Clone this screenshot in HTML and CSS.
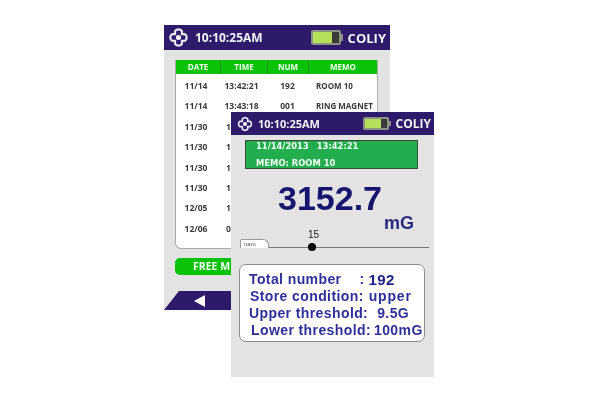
FILE: index.html
```html
<!DOCTYPE html>
<html lang="en">
<head>
    <meta charset="UTF-8">
    <title>COLIY gaussmeter</title>
    <link rel="stylesheet" href="styles.css">
</head>
<body>
    <svg width="0" height="0" class="defs">
        <symbol id="logo" viewBox="2 2 20 20">
            <path fill="none" stroke="#e8e6f2" stroke-width="1.9" d="M9 6.5 A3.6 3.6 0 0 1 15 6.5 L15 9 L17.5 9 A3.6 3.6 0 0 1 17.5 15 L15 15 L15 17.5 A3.6 3.6 0 0 1 9 17.5 L9 15 L6.5 15 A3.6 3.6 0 0 1 6.5 9 L9 9 Z"/>
            <circle cx="12" cy="12" r="2.2" fill="#fff"/>
        </symbol>
    </svg>

    <!-- back screen: record list -->
    <div class="device device-back">
        <div class="topbar">
            <svg class="logo"><use href="#logo"/></svg>
            <span class="clock">10:10:25AM</span>
            <div class="battery"><div class="charge"></div></div>
            <span class="brand">COLIY</span>
        </div>
        <div class="list">
            <div class="list-head">
                <span>DATE</span><span>TIME</span><span>NUM</span><span>MEMO</span>
            </div>
            <div class="list-row"><span>11/14</span><span>13:42:21</span><span>192</span><span class="memo">ROOM 10</span></div>
            <div class="list-row"><span>11/14</span><span>13:43:18</span><span>001</span><span class="memo">RING MAGNET</span></div>
            <div class="list-row"><span>11/30</span><span class="cut">1</span></div>
            <div class="list-row"><span>11/30</span><span class="cut">1</span></div>
            <div class="list-row"><span>11/30</span><span class="cut">1</span></div>
            <div class="list-row"><span>11/30</span><span class="cut">1</span></div>
            <div class="list-row"><span>12/05</span><span class="cut">1</span></div>
            <div class="list-row"><span>12/06</span><span class="cut">0</span></div>
        </div>
        <div class="free-btn">FREE M</div>
        <div class="softkeys">
            <div class="softkey"><span class="arrow"></span></div>
        </div>
    </div>

    <!-- front screen: record detail -->
    <div class="device device-front">
        <div class="topbar">
            <svg class="logo"><use href="#logo"/></svg>
            <span class="clock">10:10:25AM</span>
            <div class="battery"><div class="charge"></div></div>
            <span class="brand">COLIY</span>
        </div>
        <div class="record">
            <div class="record-line"><span>11/14/2013</span><span>13:42:21</span></div>
            <div class="record-line">MEMO: ROOM 10</div>
        </div>
        <div class="reading">3152.7</div>
        <div class="unit">mG</div>
        <div class="slider">
            <div class="tab">nam</div>
            <div class="track">
                <span class="knob-label">15</span>
                <span class="knob"></span>
            </div>
        </div>
        <div class="info">
            <div class="info-row"><span class="label">Total number</span><span class="colon">:</span><span class="val-a">192</span></div>
            <div class="info-row shift-1"><span class="label">Store condition:</span><span class="val-b">upper</span></div>
            <div class="info-row"><span class="label">Upper threshold:</span><span class="val-c">9.5G</span></div>
            <div class="info-row shift-2"><span class="label">Lower threshold:</span><span class="val-d">100mG</span></div>
        </div>
    </div>
</body>
</html>
```

FILE: styles.css
```css
body {
    margin: 0;
    width: 600px;
    height: 400px;
    background: #fff;
    overflow: hidden;
    position: relative;
    font-family: "Liberation Sans", Arial, sans-serif;
}

.defs {
    position: absolute;
}

.device {
    position: absolute;
    background: #e3e3e3;
    display: flex;
    flex-direction: column;
    filter: blur(0.55px);
}

.device-back {
    left: 164px;
    top: 25px;
    width: 226px;
    height: 285px;
}

.device-front {
    left: 231px;
    top: 112px;
    width: 203px;
    height: 265px;
}

.topbar {
    display: flex;
    align-items: center;
    height: 25px;
    background: #2d1a6b;
    color: #f2f2f6;
    font-family: "Open Sans", sans-serif;
    font-weight: 700;
    flex-shrink: 0;
}

.device-back .topbar {
    padding: 0 4px 0 3px;
}

.device-front .topbar {
    height: 23px;
    padding: 0 3px 0 5px;
}

.logo {
    width: 23px;
    height: 23px;
}

.device-front .logo {
    width: 18px;
    height: 18px;
}

.clock {
    margin-left: 5px;
    font-size: 12px;
    flex: 1;
}

.device-front .clock {
    margin-left: 4px;
    font-size: 11px;
}

.battery {
    width: 30px;
    height: 15px;
    box-sizing: border-box;
    border: 2px solid #8f9088;
    border-radius: 2px;
    background: #3a3a3a;
    margin-right: 7px;
    position: relative;
}

.battery::after {
    content: "";
    position: absolute;
    right: -4px;
    top: 2px;
    width: 2px;
    height: 7px;
    background: #8f9088;
}

.device-front .battery {
    width: 26px;
    height: 13px;
    margin-right: 7px;
}

.device-front .battery::after {
    height: 5px;
}

.charge {
    width: 76%;
    height: 100%;
    background: #b4e05a;
}

.brand {
    font-size: 13px;
}

.device-front .brand {
    font-size: 12px;
}

/* record list */
.list {
    margin: 10px 12px 0 11px;
    height: 189px;
    background: #fff;
    border: 1px solid #a9a9a9;
    border-top: 0;
    border-radius: 0 0 6px 6px;
    box-sizing: border-box;
}

.list-head,
.list-row {
    display: grid;
    grid-template-columns: 44px 47px 41px 1fr;
    text-align: center;
    color: #3a3a3a;
    font-weight: 700;
    font-family: "Open Sans", sans-serif;
}

.list-head {
    height: 14px;
    line-height: 14px;
    background: #0bc20b;
    color: #f4fff4;
    font-size: 8px;
    margin-bottom: 2px;
}

.list-head span + span {
    border-left: 1px solid #1f9f1f;
}

.list-row {
    height: 20.4px;
    line-height: 20.4px;
    font-size: 8.5px;
    grid-template-columns: 40px 51px 41px 1fr;
}

.memo {
    font-size: 8px;
    text-align: left;
    padding-left: 8px;
    white-space: nowrap;
}

.cut {
    text-align: left;
    padding-left: 10px;
}

.free-btn {
    margin: 9px 0 0 11px;
    width: 203px;
    height: 17px;
    line-height: 17px;
    padding-left: 18px;
    background: #0bc20b;
    border-radius: 5px;
    color: #f4fff4;
    font-size: 10.5px;
    font-weight: 700;
    font-family: "Open Sans", sans-serif;
    box-sizing: border-box;
}

.softkeys {
    margin-top: auto;
    height: 19px;
    display: flex;
}

.softkey {
    width: 70px;
    background: #2d1a6b;
    clip-path: polygon(15px 0, 100% 0, 100% 100%, 0 100%);
    display: flex;
    align-items: center;
    justify-content: center;
}

.arrow {
    border-right: 11px solid #fff;
    border-top: 6px solid transparent;
    border-bottom: 6px solid transparent;
}

/* record detail */
.record {
    margin: 5px 16px 0 14px;
    height: 29px;
    box-sizing: border-box;
    padding: 0 0 0 10px;
    background: #22ad4e;
    border: 1px solid #3c4a3c;
    color: #f4fff0;
    font-family: "DejaVu Sans", sans-serif;
    font-weight: 700;
    font-size: 8.4px;
    line-height: 17px;
    display: flex;
    flex-direction: column;
    justify-content: center;
}

.record-line {
    display: flex;
    gap: 8px;
}

.reading {
    margin-top: 10px;
    text-align: center;
    padding-right: 5px;
    color: #16166e;
    font-size: 34px;
    font-weight: 700;
    line-height: 38px;
}

.unit {
    text-align: right;
    padding-right: 20px;
    color: #2a2a80;
    font-size: 18px;
    font-weight: 700;
    line-height: 20px;
    margin-top: -4px;
}

.slider {
    margin: -2px 5px 0 9px;
    display: flex;
    align-items: flex-end;
    height: 17px;
}

.tab {
    width: 29px;
    height: 9px;
    line-height: 8px;
    font-size: 6px;
    color: #555;
    background: #fff;
    border: 1px solid #999;
    border-bottom: 0;
    border-radius: 2px 6px 0 0;
    padding-left: 3px;
    box-sizing: border-box;
}

.track {
    flex: 1;
    height: 1px;
    background: #777;
    position: relative;
}

.knob {
    position: absolute;
    left: 39px;
    top: -4px;
    width: 8px;
    height: 8px;
    border-radius: 50%;
    background: #000;
}

.knob-label {
    position: absolute;
    left: 39px;
    top: -18px;
    font-size: 10px;
    color: #222;
}

.info {
    margin: 16px 9px 0 8px;
    height: 78px;
    box-sizing: border-box;
    padding: 6px 0 0 9px;
    background: #fff;
    border: 1px solid #8c8c8c;
    border-radius: 7px;
    color: #2f2f99;
    font-size: 14px;
    font-weight: 700;
    letter-spacing: 0.4px;
    display: flex;
    flex-direction: column;
}

.info-row {
    display: flex;
    height: 17px;
    line-height: 17px;
    white-space: nowrap;
}

.shift-1 {
    padding-left: 1px;
}

.shift-2 {
    padding-left: 2px;
}

.colon {
    margin-left: 18px;
}

.val-a {
    margin-left: 4px;
    font-size: 15px;
    color: #1f1f8a;
}

.val-b {
    margin-left: 5px;
    letter-spacing: 0.8px;
}

.val-c {
    margin-left: 9px;
}

.val-d {
    margin-left: 3px;
}
```
